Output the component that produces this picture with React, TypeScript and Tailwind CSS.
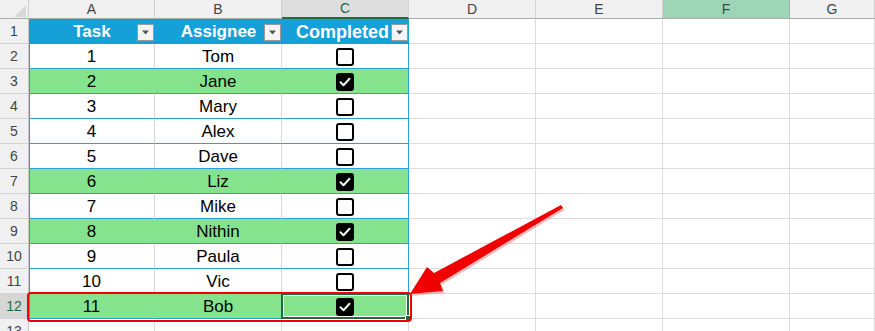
import React from "react";

interface TaskRow {
  task: number;
  assignee: string;
  done: boolean;
}

const rows: TaskRow[] = [
  { task: 1, assignee: "Tom", done: false },
  { task: 2, assignee: "Jane", done: true },
  { task: 3, assignee: "Mary", done: false },
  { task: 4, assignee: "Alex", done: false },
  { task: 5, assignee: "Dave", done: false },
  { task: 6, assignee: "Liz", done: true },
  { task: 7, assignee: "Mike", done: false },
  { task: 8, assignee: "Nithin", done: true },
  { task: 9, assignee: "Paula", done: false },
  { task: 10, assignee: "Vic", done: false },
  { task: 11, assignee: "Bob", done: true },
];

function FilterButton() {
  return (
    <div className="absolute right-[1px] top-[5px] z-10 flex h-[17px] w-[17px] items-center justify-center border border-[#9a9a9a] bg-[#f4f4f4]">
      <svg width="9" height="5" viewBox="0 0 9 5">
        <path d="M1 0.5h7L4.5 4.5z" fill="#555" />
      </svg>
    </div>
  );
}

function Checkbox({ checked }: { checked: boolean }) {
  if (checked) {
    return (
      <div className="flex h-[18px] w-[18px] items-center justify-center rounded-[3px] bg-black">
        <svg width="12" height="10" viewBox="0 0 12 10">
          <path d="M1.5 5.2l3 3 6-6.4" fill="none" stroke="#eafbe9" strokeWidth="2" strokeLinecap="round" strokeLinejoin="round" />
        </svg>
      </div>
    );
  }
  return <div className="h-[18px] w-[18px] rounded-[3px] border-2 border-black bg-white" />;
}

function RowHeader({ n, active }: { n: number; active?: boolean }) {
  return (
    <div
      className={`flex w-[29px] shrink-0 items-center justify-center border-b border-r border-b-[#d4d4d4] border-r-[#c8c8c8] pt-[1px] text-[14px] ${
        active ? "bg-[#d6d6d6] text-[#1e6b41]" : "bg-[#f0f0f0] text-[#444]"
      }`}
    >
      {n}
    </div>
  );
}

export default function App() {
  const letters = ["A", "B", "C", "D", "E", "F", "G"];
  const widths = ["w-[126px]", "w-[127px]", "w-[127px]", "w-[127px]", "w-[127px]", "w-[127px]", "flex-1"];

  return (
    <div className="relative h-[331px] w-[875px] overflow-hidden bg-white font-['Liberation_Sans',Arial,sans-serif] text-black">
      {/* column letters */}
      <div className="flex h-[19px]">
        <div className="relative w-[29px] shrink-0 border-b border-r border-b-[#ababab] border-r-[#d0d0d0] bg-[#f0f0f0]">
          <svg className="absolute left-[14px] top-[5px]" width="12" height="12" viewBox="0 0 12 12">
            <path d="M12 0V12H0z" fill="#d9d9d9" />
          </svg>
        </div>
        {letters.map((l, i) => (
          <div
            key={l}
            className={`flex shrink-0 items-center justify-center text-[14px] ${widths[i]} ${
              l === "C"
                ? "border-b-2 border-r border-b-[#1e6b41] border-r-[#d0d0d0] bg-[#dedede] text-[#1e6b41]"
                : l === "F"
                ? "border-b border-r border-b-[#ababab] border-r-[#ababab] bg-[#9fd5b7] text-[#3b4b40]"
                : "border-b border-r border-b-[#ababab] border-r-[#d0d0d0] bg-[#f0f0f0] text-[#444]"
            }`}
          >
            {l}
          </div>
        ))}
      </div>

      {/* table header row */}
      <div className="flex h-[25px]">
        <RowHeader n={1} />
        <div className="relative flex w-[126px] shrink-0 items-center justify-center bg-[#16a0d8] pt-[1px] text-[17px] font-bold text-white">
          Task
          <FilterButton />
        </div>
        <div className="relative flex w-[127px] shrink-0 items-center justify-center bg-[#16a0d8] pt-[1px] text-[17px] font-bold text-white">
          Assignee
          <FilterButton />
        </div>
        <div className="relative flex w-[127px] shrink-0 items-center overflow-hidden bg-[#16a0d8] pl-[14px] pt-[1px] text-[18px] font-bold text-white">
          <span className="whitespace-nowrap">Completed</span>
          <FilterButton />
        </div>
        {widths.slice(3).map((w, i) => (
          <div key={i} className={`shrink-0 border-b border-r border-[#dcdcdc] ${w}`} />
        ))}
      </div>

      {/* data rows */}
      {rows.map((r, idx) => {
        const rowNo = idx + 2;
        const fill = r.done ? "bg-[#86e38d]" : "bg-white";
        const inner = r.done ? "border-r-transparent" : "border-r-[#d8d8d8]";
        const last = rowNo === 12;
        return (
          <div key={rowNo} className="flex h-[25px]">
            <RowHeader n={rowNo} active={last} />
            <div
              className={`flex w-[126px] shrink-0 items-center justify-center border-b border-r border-b-[#2a9fd8] pt-[2px] text-[17px] shadow-[inset_1px_0_0_#2a9fd8] ${fill} ${inner}`}
            >
              {r.task}
            </div>
            <div className={`flex w-[127px] shrink-0 items-center justify-center border-b border-r border-b-[#2a9fd8] pt-[2px] text-[17px] ${fill} ${inner}`}>
              {r.assignee}
            </div>
            <div className={`relative flex w-[127px] shrink-0 items-center justify-center border-b border-r border-b-[#2a9fd8] border-r-[#2a9fd8] pt-[1px] ${fill}`}>
              <Checkbox checked={r.done} />
              {last && (
                <>
                  <div className="absolute inset-[-1px] border-2 border-[#1e6b41] shadow-[inset_0_0_0_1px_#ffffff]" />
                  <div className="absolute bottom-[-3px] right-[-3px] h-[6px] w-[6px] border border-white bg-[#1e6b41]" />
                </>
              )}
            </div>
            {widths.slice(3).map((w, i) => (
              <div key={i} className={`shrink-0 border-b border-r border-[#dcdcdc] ${w}`} />
            ))}
          </div>
        );
      })}

      {/* row 13, cut off */}
      <div className="flex h-[25px]">
        <RowHeader n={13} />
        {widths.map((w, i) => (
          <div key={i} className={`shrink-0 border-b border-r border-[#dcdcdc] ${w}`} />
        ))}
      </div>

      {/* annotation: red outline around row 12 */}
      <div className="pointer-events-none absolute left-[27px] top-[292px] h-[30px] w-[385px] rounded-[4px] border-2 border-[#f00000]" />

      {/* annotation: arrow */}
      <svg className="pointer-events-none absolute left-0 top-0" width="875" height="331" viewBox="0 0 875 331">
        <path
          d="M410 294 L427 267 L434 273 L561 205 L563 208 L440 283 L443 291 Z"
          fill="#cc0000"
          opacity="0.25"
          transform="translate(1.5 2)"
        />
        <path d="M410 294 L427 267 L434 273 L561 205 L563 208 L440 283 L443 291 Z" fill="#f00000" />
      </svg>
    </div>
  );
}
